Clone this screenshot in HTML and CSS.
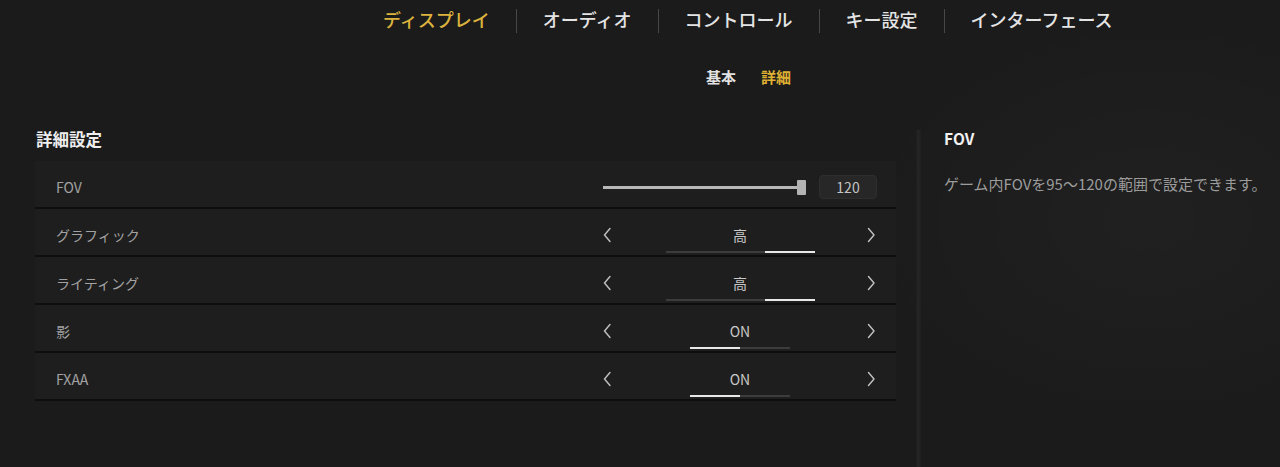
FILE: index.html
```html
<!DOCTYPE html>
<html lang="ja">
<head>
<meta charset="utf-8">
<title>設定</title>
<link rel="stylesheet" href="styles.css">
</head>
<body>
<div class="page">
  <nav class="tabs">
    <span class="tab active">ディスプレイ</span>
    <span class="sep"></span>
    <span class="tab">オーディオ</span>
    <span class="sep"></span>
    <span class="tab">コントロール</span>
    <span class="sep"></span>
    <span class="tab">キー設定</span>
    <span class="sep"></span>
    <span class="tab">インターフェース</span>
  </nav>
  <nav class="subtabs">
    <span class="subtab">基本</span>
    <span class="subtab active">詳細</span>
  </nav>
  <div class="content">
    <section class="settings">
      <h2 class="section-title">詳細設定</h2>
      <div class="row">
        <span class="label">FOV</span>
        <div class="slider-ctrl">
          <div class="track"></div>
          <div class="thumb"></div>
          <div class="valbox">120</div>
        </div>
      </div>
      <div class="row">
        <span class="label">グラフィック</span>
        <div class="select-ctrl">
          <svg class="chev" width="14" height="16" viewBox="0 0 14 16"><polyline points="10,1.5 4.5,8 10,14.5"/></svg>
          <div class="mid">
            <span class="val">高</span>
            <div class="bar bar3"><i></i><i></i><i class="on"></i></div>
          </div>
          <svg class="chev" width="14" height="16" viewBox="0 0 14 16"><polyline points="2.5,1.5 8,8 2.5,14.5"/></svg>
        </div>
      </div>
      <div class="row">
        <span class="label">ライティング</span>
        <div class="select-ctrl">
          <svg class="chev" width="14" height="16" viewBox="0 0 14 16"><polyline points="10,1.5 4.5,8 10,14.5"/></svg>
          <div class="mid">
            <span class="val">高</span>
            <div class="bar bar3"><i></i><i></i><i class="on"></i></div>
          </div>
          <svg class="chev" width="14" height="16" viewBox="0 0 14 16"><polyline points="2.5,1.5 8,8 2.5,14.5"/></svg>
        </div>
      </div>
      <div class="row">
        <span class="label">影</span>
        <div class="select-ctrl">
          <svg class="chev" width="14" height="16" viewBox="0 0 14 16"><polyline points="10,1.5 4.5,8 10,14.5"/></svg>
          <div class="mid">
            <span class="val">ON</span>
            <div class="bar bar2"><i class="on"></i><i></i></div>
          </div>
          <svg class="chev" width="14" height="16" viewBox="0 0 14 16"><polyline points="2.5,1.5 8,8 2.5,14.5"/></svg>
        </div>
      </div>
      <div class="row">
        <span class="label">FXAA</span>
        <div class="select-ctrl">
          <svg class="chev" width="14" height="16" viewBox="0 0 14 16"><polyline points="10,1.5 4.5,8 10,14.5"/></svg>
          <div class="mid">
            <span class="val">ON</span>
            <div class="bar bar2"><i class="on"></i><i></i></div>
          </div>
          <svg class="chev" width="14" height="16" viewBox="0 0 14 16"><polyline points="2.5,1.5 8,8 2.5,14.5"/></svg>
        </div>
      </div>
    </section>
    <div class="divider"></div>
    <aside class="info">
      <h3 class="info-title">FOV</h3>
      <p class="info-text">ゲーム内FOVを95〜120の範囲で設定できます。</p>
    </aside>
  </div>
</div>
</body>
</html>
```

FILE: styles.css
```css
* { box-sizing: border-box; margin: 0; padding: 0; }

html, body {
  height: 100%;
}

body {
  background: #1b1b1b;
  font-family: "Noto Sans CJK JP", "Noto Sans", sans-serif;
  color: #e6e6e6;
  overflow: hidden;
}

.page {
  height: 100vh;
  display: flex;
  flex-direction: column;
  background:
    radial-gradient(ellipse 420px 300px at 1150px 220px, rgba(255,255,255,0.025), rgba(255,255,255,0) 70%),
    #1b1b1b;
}

.tabs {
  display: flex;
  align-items: center;
  padding: 7px 0 0 383px;
  height: 31px;
}

.tab {
  font-size: 18px;
  line-height: 22px;
  font-weight: 500;
  color: #e4e4e4;
}

.tab.active {
  color: #dcb33d;
}

.sep {
  width: 1px;
  height: 24px;
  margin: 3px 26px 0;
  background: #474747;
}

.subtabs {
  display: flex;
  gap: 25px;
  padding: 36px 0 0 706px;
}

.subtab {
  font-size: 15px;
  line-height: 20px;
  font-weight: 700;
  color: #e2e2e2;
}

.subtab.active {
  color: #deb033;
}

.content {
  flex: 1;
  display: flex;
  padding: 41px 0 0 35px;
}

.settings {
  width: 861px;
  flex: none;
}

.section-title {
  font-size: 16.5px;
  line-height: 22px;
  font-weight: 700;
  color: #eeeeee;
  padding-left: 1px;
  margin-bottom: 11px;
}

.row {
  height: 48px;
  display: flex;
  align-items: center;
  justify-content: space-between;
  padding: 6px 16px 0 21px;
  background: #1e1e1e;
  border-bottom: 2px solid #0e0e0e;
}

.label {
  font-size: 14px;
  line-height: 20px;
  color: #a2a2a2;
}

.slider-ctrl {
  width: 280px;
  display: flex;
  align-items: center;
  padding-left: 3px;
}

.track {
  width: 194px;
  height: 3px;
  background: #b8b8b8;
}

.thumb {
  width: 9px;
  height: 15px;
  background: #b3b3b3;
  border-radius: 1px;
}

.valbox {
  margin-left: 13px;
  width: 58px;
  height: 24px;
  border-radius: 4px;
  background: #272727;
  border: 1px solid #2e2e2e;
  text-align: center;
  font-size: 14px;
  line-height: 22px;
  color: #c4c4c4;
}

.select-ctrl {
  width: 280px;
  align-self: stretch;
  display: grid;
  grid-template-columns: 14px 1fr 14px;
  align-items: start;
}

.chev {
  margin-top: 12px;
  fill: none;
  stroke: #c2c2c2;
  stroke-width: 1.4;
  stroke-linecap: round;
  stroke-linejoin: round;
}

.mid {
  display: flex;
  flex-direction: column;
  align-items: center;
  padding-top: 10px;
}

.val {
  font-size: 14px;
  line-height: 20px;
  color: #c8c8c8;
}

.bar {
  margin-top: 6px;
  height: 2px;
  display: flex;
}

.bar3 { width: 149px; }
.bar2 { width: 100px; }

.bar i {
  flex: 1;
  background: #3c3c3c;
}

.bar i.on {
  background: #e8e8e8;
}

.divider {
  width: 5px;
  margin: 2px 0 0 20px;
  background: linear-gradient(to right, #1f1f1f, #252525 50%, #1f1f1f);
}

.info {
  padding-left: 23px;
}

.info-title {
  font-size: 15.5px;
  line-height: 22px;
  font-weight: 700;
  color: #f2f2f2;
  margin-top: -1px;
}

.info-text {
  margin-top: 25px;
  font-size: 15px;
  line-height: 20px;
  color: #9c9c9c;
}
```
